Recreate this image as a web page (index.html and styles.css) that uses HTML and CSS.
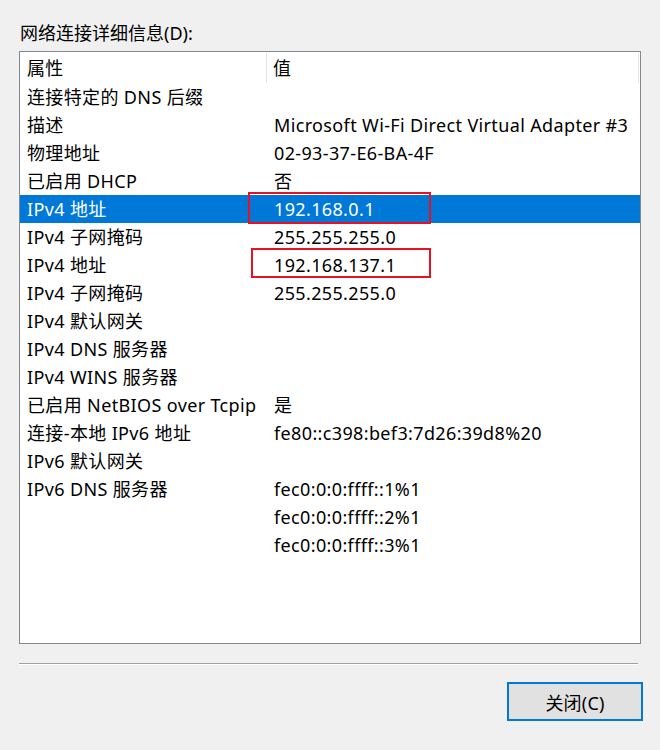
FILE: index.html
```html
<!DOCTYPE html>
<html lang="zh-CN">
<head>
<meta charset="utf-8">
<link rel="stylesheet" href="styles.css">
</head>
<body>
<div class="dialog">
  <div class="label">网络连接详细信息(D):</div>
  <div class="listbox">
    <div class="row header">
      <div class="c1">属性</div>
      <div class="c2">值</div>
    </div>
    <div class="row"><div class="c1">连接特定的 DNS 后缀</div><div class="c2"></div></div>
    <div class="row"><div class="c1">描述</div><div class="c2">Microsoft Wi-Fi Direct Virtual Adapter #3</div></div>
    <div class="row"><div class="c1">物理地址</div><div class="c2">02-93-37-E6-BA-4F</div></div>
    <div class="row"><div class="c1">已启用 DHCP</div><div class="c2">否</div></div>
    <div class="row selected"><div class="c1">IPv4 地址</div><div class="c2"><span class="mark mark1"></span>192.168.0.1</div></div>
    <div class="row"><div class="c1">IPv4 子网掩码</div><div class="c2">255.255.255.0</div></div>
    <div class="row"><div class="c1">IPv4 地址</div><div class="c2"><span class="mark mark2"></span>192.168.137.1</div></div>
    <div class="row"><div class="c1">IPv4 子网掩码</div><div class="c2">255.255.255.0</div></div>
    <div class="row"><div class="c1">IPv4 默认网关</div><div class="c2"></div></div>
    <div class="row"><div class="c1">IPv4 DNS 服务器</div><div class="c2"></div></div>
    <div class="row"><div class="c1">IPv4 WINS 服务器</div><div class="c2"></div></div>
    <div class="row"><div class="c1">已启用 NetBIOS over Tcpip</div><div class="c2">是</div></div>
    <div class="row"><div class="c1">连接-本地 IPv6 地址</div><div class="c2">fe80::c398:bef3:7d26:39d8%20</div></div>
    <div class="row"><div class="c1">IPv6 默认网关</div><div class="c2"></div></div>
    <div class="row"><div class="c1">IPv6 DNS 服务器</div><div class="c2">fec0:0:0:ffff::1%1</div></div>
    <div class="row"><div class="c1"></div><div class="c2">fec0:0:0:ffff::2%1</div></div>
    <div class="row"><div class="c1"></div><div class="c2">fec0:0:0:ffff::3%1</div></div>
  </div>
  <div class="separator"></div>
  <div class="buttons">
    <button class="btn">关闭(C)</button>
  </div>
</div>
</body>
</html>
```
FILE: styles.css
```css
html, body {
  margin: 0;
  padding: 0;
  background: #f0f0f0;
}
body {
  width: 660px;
  height: 750px;
  overflow: hidden;
  font-family: "Noto Sans", "Noto Sans CJK SC", sans-serif;
  font-size: 18px;
  letter-spacing: 0.36px;
  color: #000;
}
.dialog {
  padding: 21px 0 0 19px;
}
.label {
  height: 24px;
  line-height: 24px;
  margin-left: 1px;
  margin-bottom: 6px;
  letter-spacing: 0;
}
.listbox {
  box-sizing: border-box;
  width: 622px;
  height: 593px;
  border: 1px solid #828790;
  background: #fff;
  padding-top: 1px;
}
.row {
  display: flex;
  height: 28px;
  line-height: 28px;
  white-space: nowrap;
}
.row.header {
  height: 30px;
  line-height: 30px;
}
.c1 {
  width: 247px;
  padding-left: 7px;
  box-sizing: border-box;
}
.c2 {
  flex: 1;
  padding-left: 7px;
  position: relative;
}
.header .c1 {
  border-right: 1px solid #e5e5e5;
}
.header .c2 {
  padding-left: 6px;
  margin-right: 1px;
  border-right: 1px solid #e5e5e5;
}
.selected {
  background: #0078d7;
  color: #fff;
}
.mark {
  position: absolute;
  border: 2px solid #e81123;
  box-sizing: border-box;
}
.mark1 {
  left: -19px;
  top: -3px;
  width: 183px;
  height: 32px;
}
.mark2 {
  left: -16px;
  top: -3px;
  width: 180px;
  height: 30px;
}
.separator {
  width: 619px;
  margin-top: 19px;
  height: 1px;
  background: #a0a0a0;
  border-bottom: 1px solid #fff;
}
.buttons {
  display: flex;
  justify-content: flex-end;
  padding-right: 17px;
  margin-top: 17px;
}
.btn {
  box-sizing: border-box;
  width: 136px;
  height: 39px;
  background: #e1e1e1;
  border: 2px solid #0078d7;
  font-family: "Noto Sans", "Noto Sans CJK SC", sans-serif;
  font-size: 18px;
  letter-spacing: 0.2px;
  color: #000;
  padding: 0;
}
```
